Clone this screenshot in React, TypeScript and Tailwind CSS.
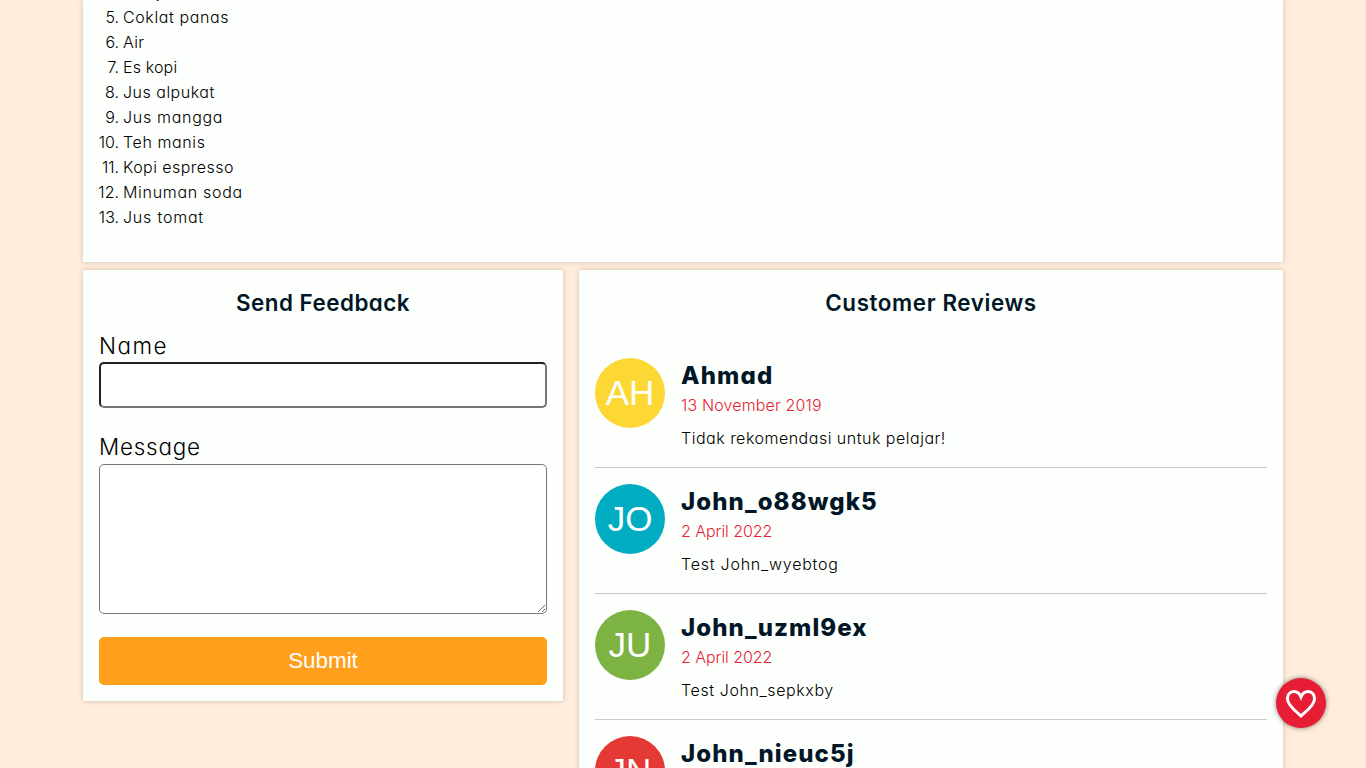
const drinks = [
  { n: 4, name: "Jus jeruk", track: "tracking-[0.7px]" },
  { n: 5, name: "Coklat panas", track: "tracking-[0.6px]" },
  { n: 6, name: "Air", track: "tracking-[0.3px]" },
  { n: 7, name: "Es kopi", track: "tracking-[0.15px]" },
  { n: 8, name: "Jus alpukat", track: "tracking-[0.5px]" },
  { n: 9, name: "Jus mangga", track: "tracking-[0.7px]" },
  { n: 10, name: "Teh manis", track: "tracking-[0.6px]" },
  { n: 11, name: "Kopi espresso", track: "tracking-[0.45px]" },
  { n: 12, name: "Minuman soda", track: "tracking-[0.7px]" },
  { n: 13, name: "Jus tomat", track: "tracking-[0.8px]" },
];

const reviews = [
  { initials: "AH", color: "bg-[#fdd835]", name: "Ahmad", nameTrack: "tracking-[1.2px]", date: "13 November 2019", dateTrack: "tracking-[0.15px]", text: "Tidak rekomendasi untuk pelajar!", textTrack: "tracking-[0.5px]" },
  { initials: "JO", color: "bg-[#00acc1]", name: "John_o88wgk5", nameTrack: "tracking-[1.1px]", date: "2 April 2022", dateTrack: "tracking-[-0.05px]", text: "Test John_wyebtog", textTrack: "tracking-[0.77px]" },
  { initials: "JU", color: "bg-[#7cb342]", name: "John_uzml9ex", nameTrack: "tracking-[1.1px]", date: "2 April 2022", dateTrack: "tracking-[-0.05px]", text: "Test John_sepkxby", textTrack: "tracking-[0.6px]" },
  { initials: "JN", color: "bg-[#e53935]", name: "John_nieuc5j", nameTrack: "tracking-[1.1px]", date: "2 April 2022", dateTrack: "tracking-[-0.05px]", text: "Test John_nieuc5j", textTrack: "tracking-[0.6px]" },
];

const card = "bg-[#fdfffc] shadow-[0_0_5px_rgba(0,0,0,0.2)]";

function Heart() {
  return (
    <svg width="30" height="29" viewBox="0 0 30 29" fill="none" stroke="currentColor" strokeWidth="3">
      <path d="M15 26C12 23 1.8 15.8 1.5 9.2C1.3 4.5 4 1.6 7.8 1.6C11 1.6 13.6 3.6 15 7C16.4 3.6 19 1.6 22.2 1.6C26 1.6 28.7 4.5 28.5 9.2C28.2 15.8 18 23 15 26Z" />
    </svg>
  );
}

export default function App() {
  return (
    <div className="h-screen overflow-hidden bg-[#ffecdb] font-[Inter,sans-serif] text-base leading-[25px] font-light text-black [font-feature-settings:'cv11']">
      <main className="mx-auto flex w-[1200px] flex-col gap-2">
        <section className={`h-[262px] ${card}`}>
          <ol className="flex h-full flex-col justify-end overflow-hidden pb-8">
            {drinks.map((d) => (
              <li key={d.n} className="flex shrink-0 gap-1">
                <span className="w-9 text-right">{d.n}.</span>
                <span className={d.track}>{d.name}</span>
              </li>
            ))}
          </ol>
        </section>

        <div className="flex items-start gap-4">
          <section className={`w-[480px] p-4 ${card}`}>
            <h2 className="mb-2 text-center text-[22.4px] leading-[34px] font-semibold tracking-[0.5px] text-[#011627]">Send Feedback</h2>
            <form className="flex flex-col text-[22.4px] leading-[34px]">
              <label htmlFor="name" className="relative top-px tracking-[1.5px]">Name</label>
              <input
                id="name"
                className="mb-[22px] h-[46px] rounded-[5px] border-2 border-t-[#212121] border-r-[#767676] border-b-[#767676] border-l-[#212121] bg-white px-2 outline-none"
              />
              <label htmlFor="message" className="tracking-[0.8px]">Message</label>
              <textarea id="message" className="mb-[23px] h-[150px] resize rounded-[5px] border border-[#767676] bg-white p-2 outline-none" />
              <button type="button" className="h-12 rounded-[5px] bg-[#ff9f1c] font-['Liberation_Sans',sans-serif] font-normal text-white">
                Submit
              </button>
            </form>
          </section>

          <section className={`flex-1 p-4 ${card}`}>
            <h2 className="mb-[22px] text-center text-[22.4px] leading-[34px] font-semibold tracking-[0.6px] text-[#011627]">Customer Reviews</h2>
            {reviews.map((r) => (
              <article key={r.name} className="flex h-[126px] gap-4 border-b border-[#cccccc] pt-4">
                <div className={`flex size-[70px] shrink-0 items-center justify-center rounded-full pb-0.5 font-['Liberation_Sans',sans-serif] text-[35px] font-normal text-white ${r.color}`}>
                  {r.initials}
                </div>
                <div>
                  <h3 className={`text-2xl leading-[35px] font-extrabold text-[#011627] ${r.nameTrack}`}>{r.name}</h3>
                  <p className={`mb-2 text-[#e71d36] ${r.dateTrack}`}>{r.date}</p>
                  <p className={r.textTrack}>{r.text}</p>
                </div>
              </article>
            ))}
          </section>
        </div>
      </main>

      <button
        type="button"
        aria-label="Favorite"
        className="fixed right-10 bottom-10 flex size-[50px] items-center justify-center rounded-full bg-[#e71d36] pt-0.5 text-white shadow-[0_0_5px_rgba(0,0,0,0.5)]"
      >
        <Heart />
      </button>
    </div>
  );
}
